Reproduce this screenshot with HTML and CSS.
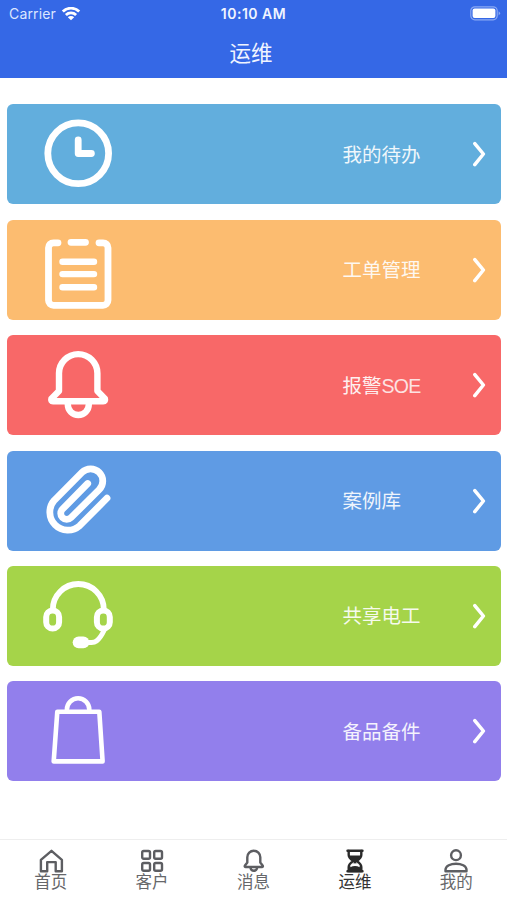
FILE: index.html
```html
<!DOCTYPE html>
<html lang="zh-CN">
<head>
  <meta charset="UTF-8" />
  <meta name="viewport" content="width=device-width, initial-scale=1.0"/>
  <title>运维</title>
  <link rel="stylesheet" href="styles.css">
</head>
<body>

  <!-- Header -->
  <header class="header">
    <div class="status-bar">
      <div class="carrier">
        <span>Carrier</span>
        <svg class="wifi" viewBox="0 0 20 14">
          <path d="M1.8 4.6a11.6 11.6 0 0 1 16.4 0M4.9 7.9a7.3 7.3 0 0 1 10.2 0"/>
          <path class="wifi-dot" d="M10 13.2L6.8 10.2a4.6 4.6 0 0 1 6.4 0z"/>
        </svg>
      </div>
      <div class="time">10:10 AM</div>
      <div class="battery-box">
        <svg class="battery" viewBox="0 0 31 15">
          <rect class="battery-frame" x=".8" y=".8" width="26.4" height="13" rx="4"/>
          <rect class="battery-level" x="2.6" y="2.6" width="22.8" height="9.4" rx="2"/>
          <path class="battery-tip" d="M28.6 5.2q3 2.1 0 4.2z"/>
        </svg>
      </div>
    </div>
    <h1 class="title">运维</h1>
  </header>

  <!-- Menu cards -->
  <main class="menu">
    <a class="card todo">
      <svg class="card-icon" viewBox="0 0 80 80">
        <circle cx="40.2" cy="39.3" r="30.4"/>
        <path d="M40.2 25.9v13.6h13.2"/>
      </svg>
      <span class="card-text">我的待办</span>
      <svg class="arrow" viewBox="0 0 14 26"><path d="M2.8 2.6L11.4 13 2.8 23.6"/></svg>
    </a>
    <a class="card order">
      <svg class="card-icon" viewBox="0 0 80 80">
        <path d="M20 12.8h-4.5a5 5 0 0 0-5 5v52.5a5 5 0 0 0 5 5H65a5 5 0 0 0 5-5V17.8a5 5 0 0 0-5-5h-4M33 12.3h14.5"/>
        <path d="M24.5 31.7H56M24.5 44.1H56M24.5 57.2H56" stroke-width="6.4"/>
      </svg>
      <span class="card-text">工单管理</span>
      <svg class="arrow" viewBox="0 0 14 26"><path d="M2.8 2.6L11.4 13 2.8 23.6"/></svg>
    </a>
    <a class="card alarm">
      <svg class="card-icon" viewBox="0 0 80 80">
        <path stroke-width="6.4" d="M21 28.3a19.2 19.2 0 0 1 38.4 0V46l7.5 7.7q.8 2.6-1.6 2.6H15q-2.4 0-1.6-2.6L21 46z"/>
        <path stroke-width="6.4" d="M29.8 57.5v2a10.5 10.5 0 0 0 21 0v-2"/>
      </svg>
      <span class="card-text">报警<span class="latin">SOE</span></span>
      <svg class="arrow" viewBox="0 0 14 26"><path d="M2.8 2.6L11.4 13 2.8 23.6"/></svg>
    </a>
    <a class="card cases">
      <svg class="card-icon" viewBox="0 0 80 80">
        <path d="M69 37.2L41.7 64.7A18 18 0 0 1 16.3 39.3L44 11.4A12.1 12.1 0 0 1 61.2 28.6L33 56.7A6 6 0 0 1 24.5 48.2L49.7 22.5"/>
      </svg>
      <span class="card-text">案例库</span>
      <svg class="arrow" viewBox="0 0 14 26"><path d="M2.8 2.6L11.4 13 2.8 23.6"/></svg>
    </a>
    <a class="card share">
      <svg class="card-icon" viewBox="0 0 80 80">
        <path stroke-width="5.8" stroke-linecap="butt" d="M14.8 33.5a25.5 25.5 0 0 1 51 0"/>
        <rect x="8.2" y="34.6" width="12.9" height="18" rx="6.4" stroke-width="6"/>
        <rect x="58.9" y="34.6" width="12.9" height="18" rx="6.4" stroke-width="6"/>
        <path stroke-width="5" d="M66 54.5q-3.5 7.5-7.5 10.5-2 1.5-5 1.500H46"/>
        <rect class="solid" x="34.7" y="60.4" width="16.6" height="11.8" rx="5.9"/>
      </svg>
      <span class="card-text">共享电工</span>
      <svg class="arrow" viewBox="0 0 14 26"><path d="M2.8 2.6L11.4 13 2.8 23.6"/></svg>
    </a>
    <a class="card parts">
      <svg class="card-icon" viewBox="0 0 80 80">
        <path stroke-width="4.6" d="M19.3 20.7h42l3.3 49.7H15.7z"/>
        <path stroke-width="4.6" d="M28.9 19.5v-1a11.2 11.2 0 0 1 22.4 0v1"/>
      </svg>
      <span class="card-text">备品备件</span>
      <svg class="arrow" viewBox="0 0 14 26"><path d="M2.8 2.6L11.4 13 2.8 23.6"/></svg>
    </a>
  </main>

  <!-- Tab bar -->
  <nav class="tab-bar">
    <a class="tab">
      <svg class="tab-icon" viewBox="0 0 26 26"><path d="M2.9 11.8L13.5 2.8l10.4 9v11.500h-6.200v-9.200h-8.500v9.200H2.900z"/></svg>
      <span>首页</span>
    </a>
    <a class="tab">
      <svg class="tab-icon" viewBox="0 0 26 26">
        <rect x="3.2" y="3" width="7.8" height="7.8" rx="1.5"/><rect x="15.2" y="3" width="7.8" height="7.8" rx="1.5"/>
        <rect x="3.2" y="15" width="7.8" height="7.8" rx="1.5"/><rect x="15.2" y="15" width="7.8" height="7.8" rx="1.5"/>
      </svg>
      <span>客户</span>
    </a>
    <a class="tab">
      <svg class="tab-icon" viewBox="0 0 26 26">
        <path d="M6.3 9.3a6.5 6.5 0 0 1 13 0v5.300l2.500 3.200q.4 1.200-.8 1.200H4.600q-1.200 0-.8-1.200l2.500-3.200z"/>
        <path d="M9.500 19.500a3.300 3.300 0 0 0 6.600 0"/>
      </svg>
      <span>消息</span>
    </a>
    <a class="tab active">
      <svg class="tab-icon" viewBox="0 0 26 26">
        <path d="M5.500 2.700h15M5.500 23.300h15" stroke-width="2.400"/>
        <path d="M6.700 3v4q0 3 4.600 6-4.600 3-4.600 6v4h12.600v-4q0-3-4.600-6 4.600-3 4.600-6V3" stroke-width="2.400"/>
        <path class="sand" d="M6.700 7.500h12.600q-.5 3-5 5.500v1.500l5 5.500v3H6.700v-3l5-5.500V13q-4.500-2.500-5-5.500z"/>
        <path class="glass" d="M12 15q-3.700 1.500-3.700 4.300 4.700-2.600 9.400 0 0-2.800-3.700-4.300l-1 .8z"/>
      </svg>
      <span>运维</span>
    </a>
    <a class="tab">
      <svg class="tab-icon" viewBox="0 0 26 26">
        <circle cx="13" cy="7.2" r="4.9"/>
        <path d="M2.500 23.200v-1.500c0-8 21-8 21 0v1.500z"/>
      </svg>
      <span>我的</span>
    </a>
  </nav>

</body>
</html>
```

FILE: styles.css
```css
* {
  box-sizing: border-box;
}

body {
  margin: 0;
  height: 900px;
  display: flex;
  flex-direction: column;
  font-family: 'Liberation Sans', 'Noto Sans CJK SC', sans-serif;
  background: #fff;
  overflow: hidden;
}

svg {
  display: block;
  fill: none;
  stroke-linecap: round;
  stroke-linejoin: round;
}

.header {
  height: 78.3px;
  background: #3568e6;
  color: #f0f4ff;
}

.status-bar {
  display: flex;
  align-items: center;
  height: 27px;
  padding: 0 6px 0 9px;
  font-family: Inter, sans-serif;
  font-size: 14px;
}

.carrier, .battery-box {
  flex: 1;
  display: flex;
  align-items: center;
}

.carrier {
  gap: 5px;
  color: #dce6ff;
  letter-spacing: 0.15px;
}

.wifi {
  width: 20px;
  height: 14px;
  stroke: #fff;
  stroke-width: 2.8;
  stroke-linecap: butt;
}

.wifi-dot {
  fill: #fff;
  stroke: none;
}

.time {
  margin-right: 3px;
  font-weight: 600;
  letter-spacing: 0.5px;
}

.battery-box {
  justify-content: flex-end;
}

.battery {
  width: 31px;
  height: 15px;
}

.battery-frame {
  stroke: #8ba9f3;
  stroke-width: 1.2;
}

.battery-level {
  fill: #fff;
}

.battery-tip {
  fill: #8ba9f3;
}

.title {
  margin: 0;
  padding-right: 5px;
  font-size: 21.5px;
  font-weight: normal;
  line-height: 54px;
  text-align: center;
}

.menu {
  flex: 1;
  display: flex;
  flex-direction: column;
  gap: 15.4px;
  padding: 26.1px 6.5px 0 7px;
}

.card {
  display: flex;
  align-items: center;
  height: 100px;
  padding: 0 15px 0 31px;
  border-radius: 6px;
  color: #fff;
}

.todo { background: #62aedd; }
.order { background: #fcbc70; }
.alarm { background: #f86868; }
.cases { background: #5f9be4; }
.share { background: #a5d449; }
.parts { background: #927fec; }

.card-icon {
  width: 80px;
  height: 80px;
  stroke: #fff;
  stroke-width: 6.8;
}

.solid {
  fill: #fff;
  stroke: none;
}

.card-text {
  width: 129px;
  margin-left: auto;
  padding-top: 1px;
  font-size: 19.5px;
  line-height: 28px;
  opacity: 0.9;
}

.latin {
  letter-spacing: -0.7px;
  opacity: 0.9;
}

.arrow {
  width: 14px;
  height: 26px;
  stroke: #fff;
  stroke-width: 3.5;
}

.tab-bar {
  display: flex;
  height: 61px;
  padding-top: 8px;
  border-top: 1px solid #eee;
}

.tab {
  flex: 1;
  display: flex;
  flex-direction: column;
  align-items: center;
  font-size: 16.5px;
  line-height: 17px;
  color: #66676a;
}

.tab-icon {
  width: 26px;
  height: 26px;
  stroke: #5d5e62;
  stroke-width: 2.4;
}

.active {
  color: #333;
}

.active .tab-icon {
  stroke: #2a2a2a;
}

.sand {
  fill: #2a2a2a;
  stroke: none;
}

.glass {
  fill: #fff;
  stroke: none;
}
```
